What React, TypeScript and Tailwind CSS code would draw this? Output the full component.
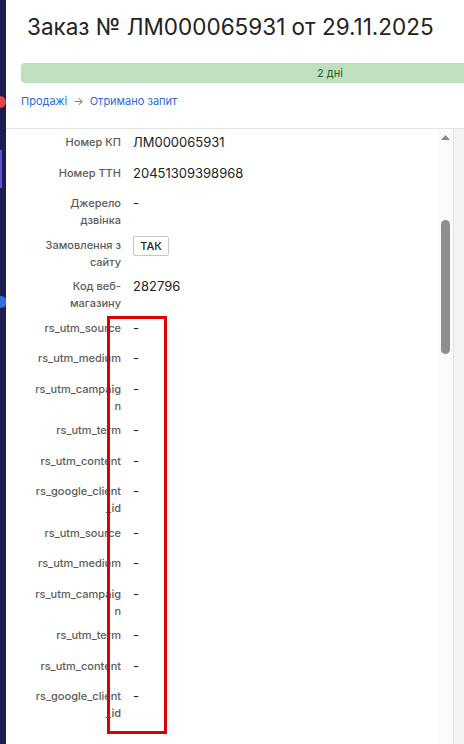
import React from 'react';

const rows: { label: string; value?: string; badge?: string }[] = [
  { label: 'Номер КП', value: 'ЛМ000065931' },
  { label: 'Номер ТТН', value: '20451309398968' },
  { label: 'Джерело дзвінка', value: '-' },
  { label: 'Замовлення з сайту', badge: 'ТАК' },
  { label: 'Код веб-магазину', value: '282796' },
  { label: 'rs_utm_source', value: '-' },
  { label: 'rs_utm_medium', value: '-' },
  { label: 'rs_utm_campaign', value: '-' },
  { label: 'rs_utm_term', value: '-' },
  { label: 'rs_utm_content', value: '-' },
  { label: 'rs_google_client_id', value: '-' },
  { label: 'rs_utm_source', value: '-' },
  { label: 'rs_utm_medium', value: '-' },
  { label: 'rs_utm_campaign', value: '-' },
  { label: 'rs_utm_term', value: '-' },
  { label: 'rs_utm_content', value: '-' },
  { label: 'rs_google_client_id', value: '-' },
];

export default function App() {
  return (
    <div className="relative flex h-screen w-full overflow-hidden bg-white font-['Inter',sans-serif] text-[#222]">
      {/* Sidebar strip */}
      <aside className="relative w-[6px] shrink-0 overflow-hidden bg-[#201b50]">
        <span className="absolute left-[-6px] top-[96px] h-[12px] w-[12px] rounded-full bg-[#e04545]" />
        <span className="absolute left-0 top-[150px] h-[38px] w-[2px] bg-[#5b50d6]" />
        <span className="absolute left-[-5px] top-[296px] h-[12px] w-[12px] rounded-full bg-[#2f6fe0]" />
      </aside>

      {/* Main */}
      <main className="flex min-w-0 flex-1 flex-col">
        <div className="border-b border-[#e4e4e4] pl-[15px] pb-[19px] pt-[12px]">
          <h1 className="whitespace-nowrap pl-[6px] text-[22.5px] font-normal leading-[30px] text-[#222]">
            Заказ № ЛМ000065931 от 29.11.2025
          </h1>
          <div className="mt-[21px] flex h-[20px] w-[618px] items-center justify-center rounded-l-[4px] bg-[#bfdfbf] text-[11px] text-[#1d5f28]">
            2 дні
          </div>
          <div className="mt-[10px] flex items-center gap-[6px] text-[11px] leading-[16px]">
            <span className="text-[#2b6ccf]">Продажі</span>
            <span className="text-[#777]">→</span>
            <span className="text-[#2b6ccf]">Отримано запит</span>
          </div>
        </div>

        <div className="flex min-h-0 flex-1">
          {/* Details list */}
          <div className="w-[432px] shrink-0 overflow-hidden">
            <div className="border-b border-[#e4e4e4] pt-[5px] pb-[15px]">
              {rows.map((row, i) => (
                <div key={i} className="mb-[7.5px] flex min-h-[23px] items-start gap-[12px] pl-[28px]">
                  <div className="w-[87px] shrink-0 break-words text-right text-[11px] font-medium leading-[17px] text-[#5c5c5c]">
                    {row.label}
                  </div>
                  <div className="text-[13px] leading-[17px] text-[#222]">
                    {row.badge ? (
                      <span className="-mt-[1px] inline-flex h-[20px] w-[36px] items-center justify-center rounded-[2px] border border-[#c8c8c8] text-[11px] font-medium">
                        {row.badge}
                      </span>
                    ) : (
                      row.value
                    )}
                  </div>
                </div>
              ))}
            </div>
          </div>

          {/* Scrollbar */}
          <div className="relative w-[15px] shrink-0 bg-[#fafafa]">
            <svg className="absolute left-[3px] top-[6px]" width="9" height="5" viewBox="0 0 9 5">
              <path d="M4.5 0 L9 5 L0 5 Z" fill="#8a8a8a" />
            </svg>
            <div className="absolute left-[3px] top-[91px] h-[134px] w-[9px] rounded-full bg-[#8e8e8e]" />
          </div>

          <div className="flex-1 border-l border-[#e2e2e2] bg-[#f4f4f4]" />
        </div>
      </main>

      {/* Annotation box */}
      <div className="pointer-events-none absolute left-[107px] top-[316px] h-[418px] w-[60px] border-[3px] border-[#dc0000]" />
    </div>
  );
}
